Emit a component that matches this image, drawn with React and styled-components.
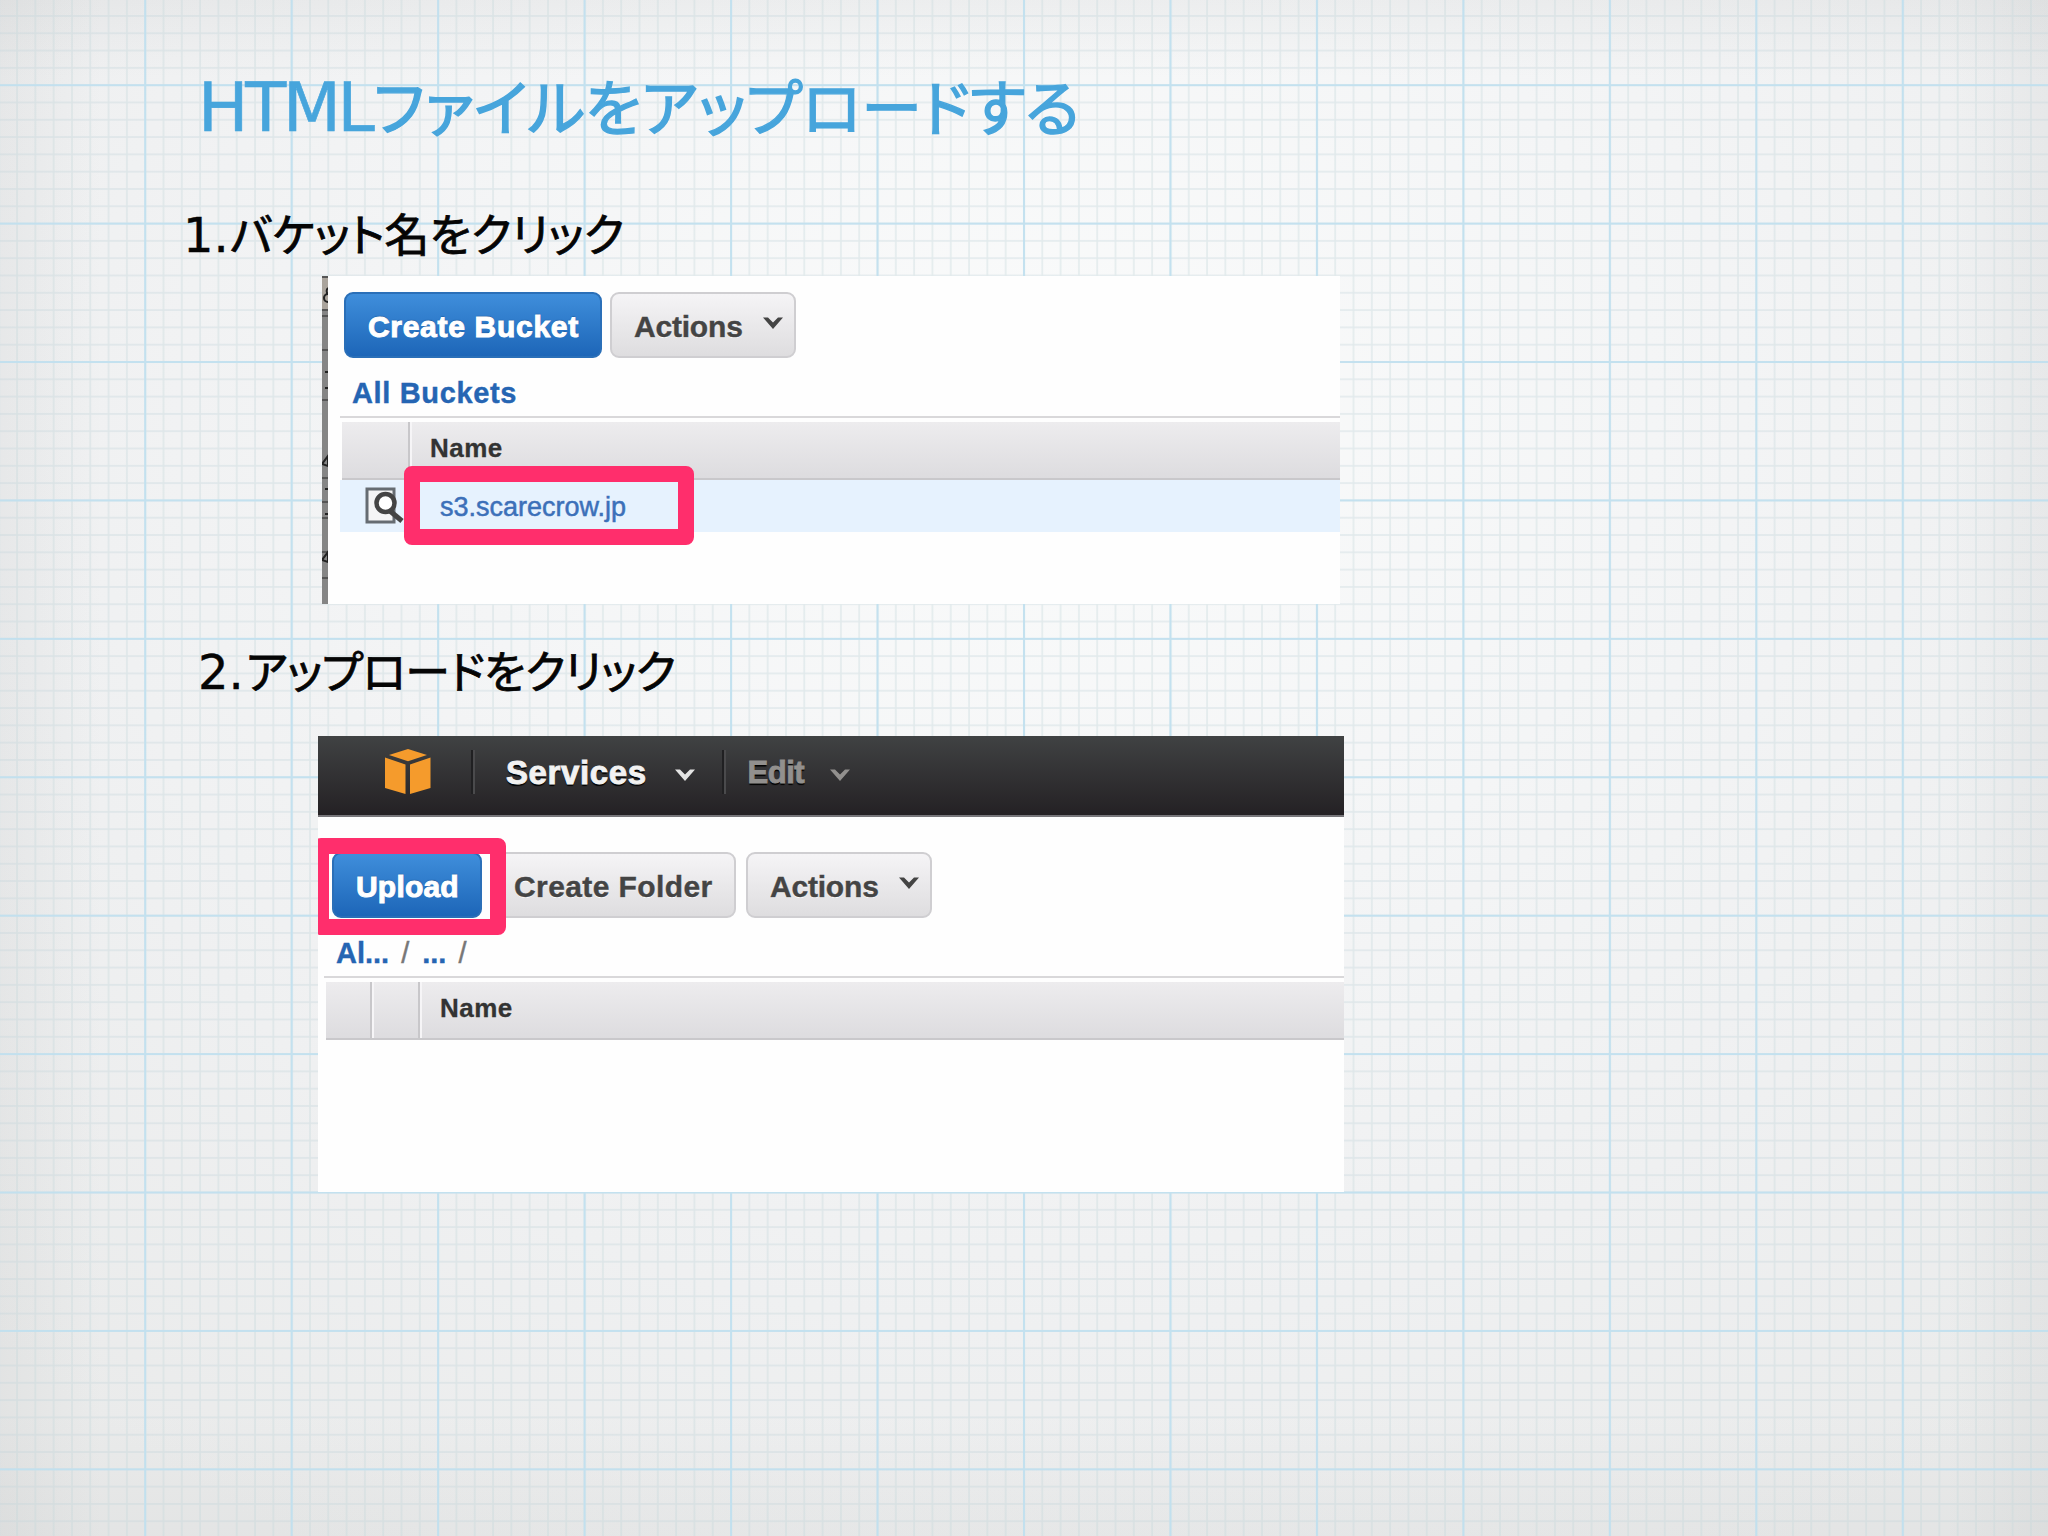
import React from 'react';
import styled, { createGlobalStyle } from 'styled-components';

const GlobalStyle = createGlobalStyle`
  * {
    box-sizing: border-box;
  }

  body {
    margin: 0;
    background: #eff0f0;
  }
`;

const Slide = styled.main`
  position: relative;
  width: 2048px;
  height: 1536px;
  overflow: hidden;
  background:
    linear-gradient(90deg, rgba(120, 125, 125, 0.07), transparent 5%, transparent 95%, rgba(120, 125, 125, 0.07)),
    linear-gradient(rgba(120, 125, 125, 0.07), transparent 5%, transparent 92%, rgba(120, 125, 125, 0.06)),
    radial-gradient(ellipse 1500px 1300px at 1050px 420px, #fafbfb 0%, #f4f5f6 40%, #eff0f1 70%, #eaebeb 100%);
`;

const Paper = styled.svg`
  position: absolute;
  inset: 0;
  width: 100%;
  height: 100%;
`;

const Content = styled.div`
  position: relative;
  display: flex;
  flex-direction: column;
  align-items: flex-start;
`;

const Heading = styled.h1`
  margin: 68px 0 0 198px;
  height: 80px;
  line-height: 80px;
  font-family: 'DejaVu Sans', 'Noto Sans CJK JP', sans-serif;
  font-size: 67px;
  font-weight: 400;
  font-feature-settings: 'palt';
  color: #47a5dc;
  white-space: nowrap;
`;

const Step = styled.h2`
  margin: ${(p) => p.$margin};
  height: 60px;
  line-height: 60px;
  font-family: 'DejaVu Sans', 'Noto Sans CJK JP', sans-serif;
  font-size: 48px;
  font-weight: 400;
  font-feature-settings: 'palt';
  color: #050505;
  white-space: nowrap;
`;

const Run = styled.span`
  margin-left: ${(p) => p.$left || 0}px;
  font-size: ${(p) => (p.$size ? `${p.$size}px` : 'inherit')};
  letter-spacing: ${(p) => p.$spacing || 0}px;
  -webkit-text-stroke: ${(p) => p.$stroke || 0}px currentColor;
`;

const Panel = styled.section`
  position: relative;
  display: flex;
  flex-direction: column;
  width: ${(p) => p.$width}px;
  height: ${(p) => p.$height}px;
  margin-left: ${(p) => p.$left}px;
  padding-left: ${(p) => p.$inset || 0}px;
  background: #fefefe;
  font-family: 'Liberation Sans', Arial, sans-serif;
  overflow: hidden;
`;

const Edge = styled.svg`
  position: absolute;
  left: 0;
  top: 0;
`;

const Toolbar = styled.div`
  display: flex;
  height: 66px;
  margin: ${(p) => p.$margin};
`;

const Button = styled.button`
  display: flex;
  align-items: center;
  justify-content: space-between;
  width: ${(p) => p.$width}px;
  height: 66px;
  margin-right: ${(p) => p.$gap || 0}px;
  padding: 4px ${(p) => p.$right || 10}px 0 ${(p) => p.$pad || 22}px;
  border: 2px solid ${(p) => (p.$primary ? '#2a6fb8' : '#cfced1')};
  border-radius: 9px;
  background: ${(p) => (p.$primary
    ? 'linear-gradient(#3f8edb, #1d66b8)'
    : 'linear-gradient(#f5f4f6, #dedddf)')};
  color: ${(p) => (p.$primary ? '#fff' : '#444')};
  font-family: inherit;
  font-size: 30px;
  font-weight: 700;
  letter-spacing: ${(p) => p.$spacing || 0}px;
  -webkit-text-stroke: ${(p) => (p.$primary ? '1px #fff' : '0.4px #444')};
  text-shadow: ${(p) => (p.$primary ? '0 -1px 1px #174f91' : '0 1px 0 #fff')};
  white-space: nowrap;
`;

const Breadcrumb = styled.div`
  display: flex;
  height: 40px;
  margin: ${(p) => p.$margin};
  line-height: 41px;
  font-size: 29px;
  font-weight: 700;
  letter-spacing: ${(p) => p.$spacing || 0}px;
  color: #2565b3;
  -webkit-text-stroke: 0.4px #2565b3;
`;

const Slash = styled.span`
  margin: 0 13px 0 12px;
  font-weight: 400;
  color: #777;
  -webkit-text-stroke: 0.4px #777;
`;

const TableHead = styled.div`
  display: flex;
  height: 64px;
  margin-left: ${(p) => p.$left}px;
  padding: 4px 0 0 2px;
  border-top: 2px solid #d9d8da;
`;

const HeadCell = styled.div`
  flex: ${(p) => (p.$width ? `0 0 ${p.$width}px` : 1)};
  padding-left: ${(p) => p.$pad || 0}px;
  border-right: ${(p) => (p.$width ? '2px solid #c8c7ca' : '0')};
  border-bottom: 2px solid #c9c8cb;
  background: linear-gradient(#edecee, #dddcdf);
  font-size: 26px;
  font-weight: 700;
  line-height: 53px;
  letter-spacing: 0.5px;
  color: #333;
  -webkit-text-stroke: 0.3px #333;

  & + & {
    box-shadow: inset 2px 0 #f6f5f7;
  }
`;

const Row = styled.div`
  display: flex;
  align-items: center;
  height: 52px;
  margin-left: 12px;
  padding-left: 25px;
  background: #e6f2fe;
`;

const BucketLink = styled.span`
  margin-left: 35px;
  padding-top: 3px;
  font-size: 27px;
  color: #3c70b9;
  -webkit-text-stroke: 0.5px #3c70b9;
`;

const Marker = styled.div`
  position: absolute;
  left: ${(p) => p.$x}px;
  top: ${(p) => p.$y}px;
  width: ${(p) => p.$width}px;
  height: ${(p) => p.$height}px;
  border: 16px solid #ff2e6c;
  border-radius: 8px;
`;

const NavBar = styled.nav`
  display: flex;
  align-items: center;
  flex: 0 0 81px;
  padding: 0 0 8px 67px;
  border-bottom: 2px solid #77767a;
  background: linear-gradient(#404243, #242124);
`;

const NavDivider = styled.i`
  width: 4px;
  height: 44px;
  margin-left: ${(p) => p.$left}px;
  border-left: 2px solid #202022;
  border-right: 2px solid #4a4a4c;
`;

const NavItem = styled.span`
  margin: 2px ${(p) => p.$right}px 0 ${(p) => p.$left}px;
  font-size: ${(p) => p.$size}px;
  font-weight: 700;
  letter-spacing: ${(p) => p.$spacing || 0}px;
  color: ${(p) => p.$color};
  -webkit-text-stroke: 0.9px ${(p) => p.$color};
  text-shadow: 0 2px 1px #000;
`;

const ChevronIcon = styled.svg`
  margin-top: ${(p) => (p.$raised ? -8 : 7)}px;
`;

const Chevron = ({ color, raised }) => (
  <ChevronIcon $raised={raised} width="22" height="14" viewBox="0 0 22 14">
    <path d="M1 1.5h5L11 6.5l5-5h5L11 13z" fill={color} />
  </ChevronIcon>
);

const CubeLogo = () => (
  <svg width="46" height="46" viewBox="0 0 46 46">
    <path d="M4 6 23 0 42 6 23 12.300z" fill="#f59b2c" />
    <path d="M0 8.500 20.500 15.500V45L0 39z" fill="#f59b2c" />
    <path d="M45.500 8.500 25 15.500V45l20.500-6z" fill="#f59b2c" />
  </svg>
);

const InspectIcon = () => (
  <svg width="40" height="38" viewBox="0 0 40 38">
    <rect x="2" y="2" width="27" height="33" fill="#f4f4f5" stroke="#666c72" strokeWidth="3" />
    <path d="m25 24 12 10" stroke="#444" strokeWidth="5" />
    <circle cx="20.500" cy="16" r="9" fill="#fff" stroke="#444" strokeWidth="4.500" />
  </svg>
);

const GraphPaper = () => (
  <Paper>
    <defs>
      <pattern id="minor" x="144.2" y="84.2" width="18.308" height="17.302" patternUnits="userSpaceOnUse">
        <path d="M0 1h18.308M1 0v17.302" stroke="#c2d4d8" strokeOpacity="0.42" strokeWidth="1.5" fill="none" />
      </pattern>
      <pattern id="major" x="144.2" y="84.2" width="146.464" height="138.416" patternUnits="userSpaceOnUse">
        <path d="M0 1h146.464M1 0v138.416" stroke="#c0e0f0" strokeOpacity="0.9" strokeWidth="2.2" fill="none" />
      </pattern>
    </defs>
    <rect width="2048" height="1536" fill="url(#minor)" />
    <rect width="2048" height="1536" fill="url(#major)" />
  </Paper>
);

const WindowEdge = () => (
  <Edge width="6" height="328" viewBox="0 0 6 328">
    <rect width="6" height="328" fill="#858585" />
    <rect width="6" height="33" fill="#aaa49c" />
    <path d="M0 1h6M0 34h6M0 40h6M0 74h6M0 124h6M0 202h6M0 226h6M0 242h6M0 276h6M0 302h6" stroke="#555" strokeWidth="2" />
    <path d="M6 12a4 4 0 0 0 0 6a4 4 0 0 0 0 8M3 96h3M3 112h3M0 188l6-8v10zM3 213h3M3 238h3M0 284l6-8v10z" stroke="#222" strokeWidth="2" fill="none" />
  </Edge>
);

const App = () => {
  return (
    <Slide>
      <GlobalStyle />
      <GraphPaper />
      <Content>
        <Heading>
          <Run $spacing={-3.2} $stroke={0.6}>HTML</Run>
          <Run $left={2} $size={61} $stroke={1.4}>ファイルをアップロードする</Run>
        </Heading>

        <Step $margin="57px 0 11px 183px">
          <Run $stroke={0.4}>1.</Run>
          <Run $left={1} $size={45} $stroke={0.8}>バケット名をクリック</Run>
        </Step>
        <Panel $left={322} $width={1018} $height={328} $inset={6}>
          <WindowEdge />
          <Toolbar $margin="16px 0 0 16px">
            <Button $primary $width={258} $gap={8} $spacing={0.7}>Create Bucket</Button>
            <Button $width={186} $spacing={-0.2}>
              Actions
              <Chevron color="#444" raised />
            </Button>
          </Toolbar>
          <Breadcrumb $margin="15px 0 3px 24px" $spacing={0.65}>All Buckets</Breadcrumb>
          <TableHead $left={12}>
            <HeadCell $width={68} />
            <HeadCell $pad={20}>Name</HeadCell>
          </TableHead>
          <Row>
            <InspectIcon />
            <BucketLink>s3.scarecrow.jp</BucketLink>
          </Row>
          <Marker $x={82} $y={190} $width={290} $height={79} />
        </Panel>

        <Step $margin="38px 0 34px 198px">
          <Run $stroke={0.4}>2.</Run>
          <Run $left={2} $size={45} $spacing={-0.7} $stroke={0.8}>アップロードをクリック</Run>
        </Step>
        <Panel $left={318} $width={1026} $height={456}>
          <NavBar>
            <CubeLogo />
            <NavDivider $left={40} />
            <NavItem $left={31} $right={27} $size={33} $spacing={0.6} $color="#f2f2f2">Services</NavItem>
            <Chevron color="#e4e4e4" />
            <NavDivider $left={26} />
            <NavItem $left={22} $right={25} $size={31} $spacing={-0.5} $color="#92908e">Edit</NavItem>
            <Chevron color="#92908e" />
          </NavBar>
          <Toolbar $margin="35px 0 0 14px">
            <Button $primary $width={150} $gap={8} $spacing={0.2}>Upload</Button>
            <Button $width={246} $gap={10} $spacing={0.4}>Create Folder</Button>
            <Button $width={186} $spacing={-0.2}>
              Actions
              <Chevron color="#444" raised />
            </Button>
          </Toolbar>
          <Breadcrumb $margin="15px 0 3px 18px">
            Al...
            <Slash>/</Slash>
            ...
            <Slash>/</Slash>
          </Breadcrumb>
          <TableHead $left={6}>
            <HeadCell $width={46} />
            <HeadCell $width={48} />
            <HeadCell $pad={20}>Name</HeadCell>
          </TableHead>
          <Marker $x={-5} $y={102} $width={193} $height={97} />
        </Panel>
      </Content>
    </Slide>
  );
};

export default App;
